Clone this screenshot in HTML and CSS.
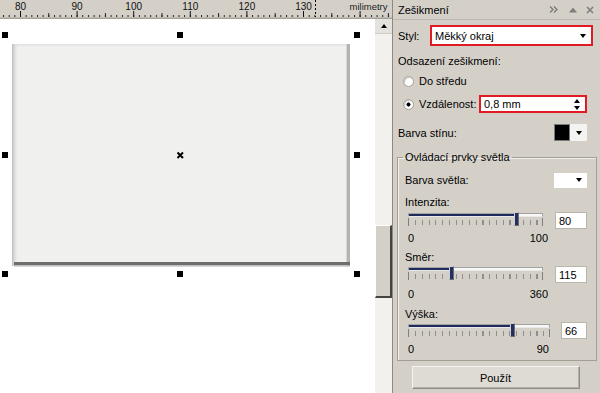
FILE: index.html
```html
<!DOCTYPE html>
<html lang="cs">
<head>
  <meta charset="UTF-8" />
  <meta name="viewport" content="width=device-width, initial-scale=1" />
  <title>Zešikmení</title>
  <link rel="stylesheet" href="styles.css">
</head>
<body>
  <div class="app">
    <div class="workspace">
      <div class="ruler">
        <svg width="392" height="19" viewBox="0 0 392 19">
          <defs>
            <pattern id="minor" x="20" y="0" width="5.66" height="19" patternUnits="userSpaceOnUse">
              <rect x="0" y="15" width="1" height="2" fill="#222" />
            </pattern>
            <pattern id="mid" x="48.3" y="0" width="56.6" height="19" patternUnits="userSpaceOnUse">
              <rect x="0" y="13" width="1" height="4" fill="#222" />
            </pattern>
            <pattern id="major" x="20" y="0" width="56.6" height="19" patternUnits="userSpaceOnUse">
              <rect x="0" y="11" width="1" height="6" fill="#111" />
            </pattern>
          </defs>
          <rect x="0" y="0" width="392" height="19" fill="url(#minor)" />
          <rect x="0" y="0" width="392" height="19" fill="url(#mid)" />
          <rect x="0" y="0" width="392" height="19" fill="url(#major)" />
          <rect x="0" y="17.5" width="392" height="1.5" fill="#a6a29a" />
          <line x1="315.5" y1="0" x2="315.5" y2="17" stroke="#000" stroke-dasharray="2 2" />
          <g class="ruler-num">
            <text x="20.5" y="10">80</text>
            <text x="77.1" y="10">90</text>
            <text x="133.7" y="10">100</text>
            <text x="190.3" y="10">110</text>
            <text x="246.9" y="10">120</text>
            <text x="303.5" y="10">130</text>
          </g>
          <rect x="348" y="2" width="41" height="9" fill="#d4d0c8" />
          <text class="ruler-unit" x="368.5" y="10">milimetry</text>
        </svg>
      </div>

      <div class="view">
        <div class="canvas">
          <svg width="375" height="374" viewBox="0 0 375 374">
            <defs>
              <linearGradient id="edgeL" x1="0" x2="1" y1="0" y2="0">
                <stop offset="0" stop-color="#bcbcbc" />
                <stop offset="1" stop-color="#f0f0ee" stop-opacity="0" />
              </linearGradient>
              <linearGradient id="edgeT" x1="0" x2="0" y1="0" y2="1">
                <stop offset="0" stop-color="#dededc" />
                <stop offset="1" stop-color="#f0f0ee" stop-opacity="0" />
              </linearGradient>
            </defs>
            <rect x="12" y="25" width="338" height="222" fill="#f0f0ee" />
            <rect x="12" y="25" width="338" height="4" fill="url(#edgeT)" />
            <rect x="12" y="25" width="7" height="222" fill="url(#edgeL)" />
            <rect x="346" y="25" width="4" height="222" fill="#b3b3b1" />
            <rect x="346" y="25" width="1" height="222" fill="#d8d8d6" />
            <rect x="14" y="243" width="336" height="3.5" fill="#6e6e6e" />
            <rect x="14" y="246.5" width="336" height="1.5" fill="#d6d6d6" />

            <rect x="2" y="13" width="6" height="6" />
            <rect x="177" y="13" width="6" height="6" />
            <rect x="354" y="13" width="6" height="6" />
            <rect x="2" y="133" width="6" height="6" />
            <rect x="354" y="133" width="6" height="6" />
            <rect x="2" y="252" width="6" height="6" />
            <rect x="177" y="252" width="6" height="6" />
            <rect x="354" y="252" width="6" height="6" />
            <path d="M177.5 133.5L183 139M183 133.5L177.5 139" stroke="#000" stroke-width="2" />
          </svg>
        </div>

        <div class="vscroll">
          <div class="sb-btn"><span class="tri-up"></span></div>
          <div class="sb-gap"></div>
          <div class="sb-thumb"></div>
        </div>
      </div>
    </div>

    <div class="docker">
      <div class="docker-head">
        <span class="docker-title">Zešikmení</span>
        <span class="head-icons">
          <svg width="9" height="9" viewBox="0 0 9 9"><path d="M1 1.5L4 4.5L1 7.5M5 1.5L8 4.5L5 7.5" stroke="#7c7c7c" stroke-width="1.4" fill="none" /></svg>
          <svg width="8" height="8" viewBox="0 0 8 8"><path d="M0 6.5L4 1.5L8 6.5Z" fill="#7c7c7c" /></svg>
          <svg width="8" height="8" viewBox="0 0 8 8"><path d="M1 1L7 7M7 1L1 7" stroke="#7c7c7c" stroke-width="1.5" /></svg>
        </span>
      </div>

      <div class="docker-body">
        <div class="row style-row">
          <span class="style-label">Styl:</span>
          <div class="combo marked">
            <span>Měkký okraj</span>
            <span class="tri-down"></span>
          </div>
        </div>

        <div class="row caption odsazeni">Odsazení zešikmení:</div>

        <div class="row radio-row first">
          <span class="radio"></span>
          <span>Do středu</span>
        </div>
        <div class="row radio-row second">
          <span class="radio checked"></span>
          <span>Vzdálenost:</span>
          <div class="spin marked">
            <span>0,8 mm</span>
            <span class="spin-arrows"><span class="tri-up"></span><span class="tri-down"></span></span>
          </div>
        </div>

        <div class="row color-row shadow-color">
          <span>Barva stínu:</span>
          <div class="swatch">
            <span class="swatch-fill black"></span>
            <span class="swatch-drop"><span class="tri-down"></span></span>
          </div>
        </div>

        <fieldset class="group">
          <legend>Ovládací prvky světla</legend>

          <div class="row color-row light-color">
            <span>Barva světla:</span>
            <div class="swatch light">
              <span class="swatch-fill"></span>
              <span class="swatch-drop"><span class="tri-down"></span></span>
            </div>
          </div>

          <div class="row caption intenzita">Intenzita:</div>
          <div class="slider-row">
            <div class="slider">
              <div class="track"><div class="fill" style="width: 80%"></div></div>
              <div class="ticks"></div>
              <div class="thumb" style="left: 80%"></div>
            </div>
            <div class="value">80</div>
          </div>
          <div class="scale scale-a"><span>0</span><span>100</span></div>

          <div class="row caption smer">Směr:</div>
          <div class="slider-row">
            <div class="slider">
              <div class="track"><div class="fill" style="width: 32%"></div></div>
              <div class="ticks"></div>
              <div class="thumb" style="left: 32%"></div>
            </div>
            <div class="value">115</div>
          </div>
          <div class="scale scale-b"><span>0</span><span>360</span></div>

          <div class="row caption vyska">Výška:</div>
          <div class="slider-row tight">
            <div class="slider wide">
              <div class="track"><div class="fill" style="width: 73.3%"></div></div>
              <div class="ticks"></div>
              <div class="thumb" style="left: 73.3%"></div>
            </div>
            <div class="value narrow">66</div>
          </div>
          <div class="scale scale-c"><span>0</span><span>90</span></div>
        </fieldset>

        <button class="apply">Použít</button>
      </div>
    </div>
  </div>
</body>
</html>
```

FILE: styles.css
```css
* {
  box-sizing: border-box;
}

body {
  margin: 0;
  font-family: "Liberation Sans", Arial, sans-serif;
  font-size: 11px;
  color: #000;
  background: #fff;
}

.app {
  display: flex;
  width: 600px;
  height: 393px;
  overflow: hidden;
}

/* left side: ruler, drawing page, scrollbar */

.workspace {
  width: 392px;
  display: flex;
  flex-direction: column;
}

.ruler {
  height: 19px;
  background: #d4d0c8;
}

.ruler svg,
.canvas svg {
  display: block;
}

.ruler-num text {
  font-family: "Liberation Sans", Arial, sans-serif;
  font-size: 10px;
  text-anchor: middle;
  fill: #111;
}

.ruler-unit {
  font-family: "Liberation Sans", Arial, sans-serif;
  font-size: 9.5px;
  text-anchor: middle;
  fill: #222;
}

.view {
  flex: 1;
  display: flex;
}

.canvas {
  width: 375px;
  background: #fff;
}

.vscroll {
  width: 17px;
  background: #f2f1ed;
  display: flex;
  flex-direction: column;
}

.sb-btn {
  height: 15px;
  background: #e4e2dc;
  border-bottom: 1px solid #cfccc4;
  display: flex;
  align-items: center;
  justify-content: center;
}

.sb-gap {
  height: 191px;
}

.sb-thumb {
  height: 73px;
  background: #d4d0c8;
  border-top: 1px solid #fff;
  border-left: 1px solid #fff;
  border-right: 2px solid #45443f;
  border-bottom: 2px solid #45443f;
}

/* triangles */

.tri-up,
.tri-down {
  display: block;
  width: 0;
  height: 0;
  border-left: 3.5px solid transparent;
  border-right: 3.5px solid transparent;
}

.tri-up {
  border-bottom: 4px solid #000;
}

.tri-down {
  border-top: 4px solid #000;
}

/* docker panel */

.docker {
  flex: 1;
  background: #d4d0c8;
  border-left: 1px solid #8e8a82;
  display: flex;
  flex-direction: column;
}

.docker-head {
  height: 20px;
  padding: 0 6px 0 5px;
  display: flex;
  align-items: center;
  border-bottom: 1px solid #bdb9b1;
}

.head-icons {
  margin-left: auto;
  display: flex;
  align-items: center;
}

.head-icons svg {
  display: block;
}

.head-icons svg + svg {
  margin-left: 11px;
}

.head-icons svg:last-child {
  margin-left: 9px;
}

.docker-body {
  padding: 0 7px 0 5px;
  display: flex;
  flex-direction: column;
}

.row {
  display: flex;
  align-items: center;
}

.caption {
  height: 14px;
}

.style-row {
  margin-top: 5px;
  height: 21px;
}

.style-label {
  width: 32px;
}

.marked {
  border: 2px solid #e01b24;
  background: #fff;
  display: flex;
  align-items: center;
}

.combo {
  flex: 1;
  height: 21px;
  padding: 0 5px 0 3px;
  justify-content: space-between;
}

.odsazeni {
  margin-top: 8px;
}

.radio-row {
  height: 14px;
}

.radio-row.first {
  margin-top: 6px;
}

.radio-row.second {
  margin-top: 7px;
  height: 18px;
}

.radio {
  width: 11px;
  height: 11px;
  margin: 0 5px 0 5px;
  border-radius: 50%;
  background: #fff;
  border: 1px solid #a5a29a;
  box-shadow: inset 1px 1px 1px #cfccc5;
}

.radio.checked {
  background: radial-gradient(circle, #000 0 1.8px, #fff 2.3px);
}

.spin {
  margin: 0 6px 0 auto;
  width: 108px;
  height: 18px;
  padding: 0 5px 0 3px;
  justify-content: space-between;
}

.spin-arrows {
  display: flex;
  flex-direction: column;
  gap: 3px;
}

.color-row {
  justify-content: space-between;
}

.shadow-color {
  margin-top: 11px;
  height: 17px;
}

.swatch {
  display: flex;
  height: 17px;
  margin-right: 6px;
}

.swatch-fill {
  width: 16px;
  height: 100%;
  background: #fff;
}

.swatch-fill.black {
  background: #000;
  border: 1px solid #7a7a7a;
}

.swatch-drop {
  width: 17px;
  height: 100%;
  background: #f3f3f1;
  display: flex;
  align-items: center;
  justify-content: center;
}

.swatch.light {
  height: 15px;
  margin-right: 0;
}

.swatch.light .swatch-drop {
  background: #fff;
}

/* light controls group */

.group {
  margin: 10px -4px 0 -1px;
  padding: 0 9px 5px 7px;
  border: 1px solid #a29e96;
  box-shadow: inset 1px 1px 0 #f2f0ec;
  min-width: 0;
}

.group legend {
  padding: 0 2px;
  margin-left: -2px;
  line-height: 12px;
}

.light-color {
  margin-top: 9px;
  height: 16px;
}

.intenzita {
  margin-top: 7px;
}

.smer {
  margin-top: 6px;
}

.vyska {
  margin-top: 7px;
}

.slider-row {
  display: flex;
  align-items: flex-start;
  height: 18px;
  margin-top: 1px;
}

.intenzita + .slider-row {
  margin-top: 2px;
}

.slider-row.tight {
  margin-top: 0;
}

.slider {
  position: relative;
  width: 135px;
  margin-left: 3px;
  padding-top: 2px;
}

.slider.wide {
  width: 142px;
  padding-top: 3px;
}

.track {
  height: 4px;
  background: #f7f7f5;
  border: 1px solid #a2a2a2;
  border-bottom-color: #e8e8e8;
}

.fill {
  height: 100%;
  background: #1f2b5c;
}

.ticks {
  height: 8px;
  margin-top: 1px;
  border-left: 1px solid #7e7e7e;
  border-right: 1px solid #7e7e7e;
  background: repeating-linear-gradient(90deg, #8e8e8e 0 1px, transparent 1px 6.75px) 6px 2px / calc(100% - 6px) 5px no-repeat;
}

.thumb {
  position: absolute;
  top: 1px;
  width: 5px;
  height: 14px;
  margin-left: -2px;
  background: #22305f;
  border: 1px solid #cdd0da;
  border-right-color: #6d6d72;
  border-bottom-color: #6d6d72;
}

.slider.wide .thumb {
  top: 2px;
}

.value {
  margin: 1px 0 0 auto;
  width: 32px;
  height: 17px;
  padding-left: 3px;
  background: #fff;
  border: 1px solid #b9b6ae;
  display: flex;
  align-items: center;
}

.value.narrow {
  width: 26px;
}

.scale {
  display: flex;
  justify-content: space-between;
  width: 140px;
  margin-left: 3px;
  height: 12px;
  align-items: center;
}

.scale-a {
  margin-top: 3px;
}

.scale-b {
  margin-top: 5px;
}

.scale-c {
  margin-top: 4px;
  width: 141px;
}

.apply {
  align-self: center;
  margin-top: 5px;
  width: 168px;
  height: 23px;
  font-family: "Liberation Sans", Arial, sans-serif;
  font-size: 11px;
  font-weight: normal;
  color: #000;
  background: #dedbd5;
  border: 1px solid #8f8c85;
  border-top-color: #f4f3f0;
  border-left-color: #f4f3f0;
  box-shadow: inset -1px -1px 0 #b3b0a8;
  padding: 0;
}
```
